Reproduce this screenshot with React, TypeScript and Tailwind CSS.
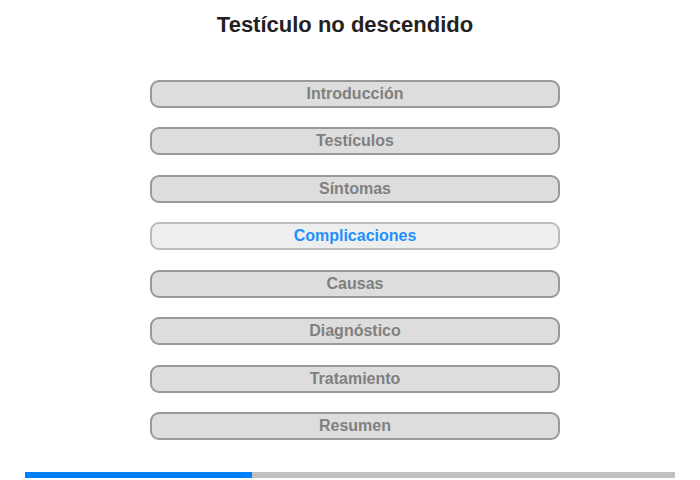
import React from "react";

const items = [
  "Introducción",
  "Testículos",
  "Síntomas",
  "Complicaciones",
  "Causas",
  "Diagnóstico",
  "Tratamiento",
  "Resumen",
];

export default function App() {
  return (
    <div className="w-[700px] h-[480px] bg-white relative overflow-hidden" style={{ fontFamily: '"Liberation Sans", Arial, sans-serif' }}>
      <div className="pt-[12px] h-[80px] text-center">
        <h1 className="text-[22px] leading-[26px] font-bold text-[#222] pr-[10px]">Testículo no descendido</h1>
      </div>
      <div className="ml-[150px] w-[410px] flex flex-col gap-[19.43px]">
        {items.map((t) => {
          const active = t === "Complicaciones";
          return (
            <div
              key={t}
              className={
                active
                  ? "h-[28px] rounded-[9px] border-2 border-[#bbb] bg-[#eee] text-[#1e90ff] flex items-center justify-center text-[16px] font-bold"
                  : "h-[28px] rounded-[9px] border-2 border-[#999] bg-[#ddd] text-[#808080] flex items-center justify-center text-[16px] font-bold"
              }
            >
              {t}
            </div>
          );
        })}
      </div>
      <div className="absolute left-[25px] top-[472px] w-[650px] h-[6px] bg-[#c0c0c0] flex">
        <div className="w-[227px] h-full bg-[#0080ff]" />
      </div>
    </div>
  );
}
